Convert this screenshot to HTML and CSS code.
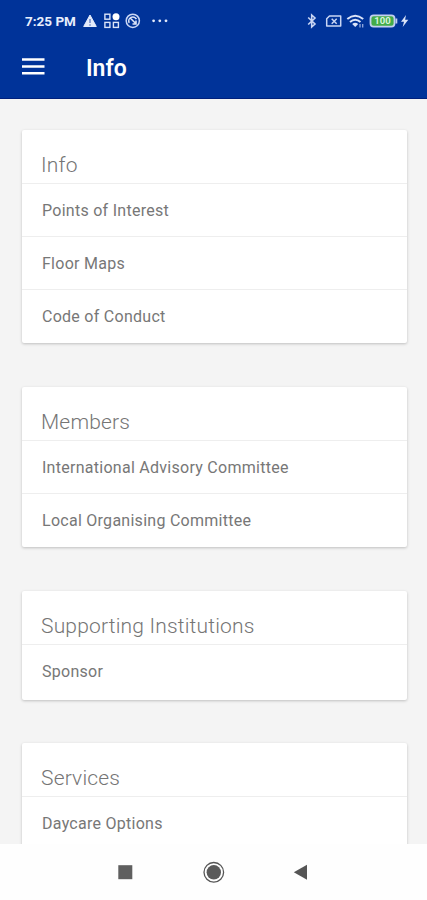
FILE: index.html
```html
<!DOCTYPE html>
<html lang="en">
<head>
    <meta charset="UTF-8">
    <meta name="viewport" content="width=device-width, initial-scale=1.0">
    <title>Info</title>
    <link rel="stylesheet" href="styles.css">
</head>
<body>
    <header class="header">
        <div class="status-bar">
            <span class="time">7:25 PM</span>
            <svg class="status-left" width="88" height="18" viewBox="0 0 88 18">
                <!-- warning -->
                <path d="M7 3 L13.3 14.5 H.7 Z" fill="#e4ebfb" stroke="#e4ebfb" stroke-linejoin="round"/>
                <path d="M7 7 V11 M7 12.3 V13.8" stroke="#5b78c0" stroke-width="1.3"/>
                <!-- apps -->
                <g fill="none" stroke="#dbe4f8" stroke-width="1.4">
                    <rect x="21.9" y="2.2" width="5" height="5"/>
                    <rect x="21.9" y="10.4" width="5" height="5"/>
                    <rect x="30.4" y="10.4" width="5" height="5"/>
                </g>
                <circle cx="33" cy="4.8" r="3.5" fill="#fff"/>
                <!-- sync -->
                <circle cx="49.8" cy="8.8" r="6.6" fill="none" stroke="#c9d6f4" stroke-width="1.5"/>
                <path d="M46.2 10.8 A4 4 0 0 1 53.4 7.2 M47.2 6 L53 11.8 M53 8.5 V12 H49.5" fill="none" stroke="#dbe4f8" stroke-width="1.6"/>
                <!-- more -->
                <g fill="#e4ebfb">
                    <circle cx="70.6" cy="8.8" r="1.4"/>
                    <circle cx="76.8" cy="8.8" r="1.4"/>
                    <circle cx="83" cy="8.8" r="1.4"/>
                </g>
            </svg>
            <svg class="status-right" width="106" height="18" viewBox="0 0 106 18">
                <!-- bluetooth -->
                <path d="M4.2 5.5 L11 12 L7.7 15 V3 L11 6 L4.2 12.5" fill="none" stroke="#c9d6f4" stroke-width="1.6"/>
                <!-- sim -->
                <path d="M25.5 4 H36.7 V14 H22.7 V6.8 Z" fill="none" stroke="#c9d6f4" stroke-width="1.5" stroke-linejoin="round"/>
                <path d="M27.7 6.7 L32.7 11.7 M32.7 6.7 L27.7 11.7" stroke="#c9d6f4" stroke-width="1.5"/>
                <!-- wifi -->
                <g fill="none" stroke="#dbe4f8" stroke-width="2">
                    <path d="M43.3 7 Q51.2 .5 59.2 7"/>
                    <path d="M46 10 Q51.2 5.5 56.5 10"/>
                </g>
                <path d="M48.2 12 Q51.2 9.6 54.2 12 L51.2 15 Z" fill="#dbe4f8"/>
                <path d="M56 12 V15.5 M58.7 12 V15.5" stroke="#93aade" stroke-width="1.3"/>
                <!-- battery -->
                <rect x="66.5" y="3.3" width="24" height="11.4" rx="3.2" fill="#43ab49" stroke="#c2cff0" stroke-width="1.8"/>
                <path d="M92.4 6.5 V11.5" stroke="#c2cff0" stroke-width="1.8"/>
                <text class="battery-text" x="78.5" y="12.3" text-anchor="middle">100</text>
                <!-- charging -->
                <path d="M102 3 L97 9.8 H100 L98.7 15 L104.3 7.8 H101.1 Z" fill="#dbe4f8"/>
            </svg>
        </div>
        <div class="toolbar">
            <svg class="menu-icon" width="23" height="18" viewBox="0 0 23 18">
                <path d="M0 1.5 H22.5 M0 8.5 H22.5 M0 15.3 H22.5" stroke="#fff" stroke-width="2.6"/>
            </svg>
            <h1>Info</h1>
        </div>
    </header>

    <main class="content">
        <section class="card">
            <h2>Info</h2>
            <ul>
                <li>Points of Interest</li>
                <li>Floor Maps</li>
                <li>Code of Conduct</li>
            </ul>
        </section>
        <section class="card">
            <h2>Members</h2>
            <ul>
                <li>International Advisory Committee</li>
                <li>Local Organising Committee</li>
            </ul>
        </section>
        <section class="card card-single">
            <h2>Supporting Institutions</h2>
            <ul>
                <li>Sponsor</li>
            </ul>
        </section>
        <section class="card">
            <h2>Services</h2>
            <ul>
                <li>Daycare Options</li>
            </ul>
        </section>
    </main>

    <nav class="nav-bar">
        <svg width="22" height="22" viewBox="0 0 22 22">
            <rect x="3.3" y="4.2" width="14" height="14" fill="#5f5f5f"/>
        </svg>
        <svg width="22" height="22" viewBox="0 0 22 22">
            <circle cx="10.8" cy="11.3" r="9.8" fill="none" stroke="#555" stroke-width="1.3"/>
            <circle cx="10.8" cy="11.3" r="7.2" fill="#5a5a5a"/>
        </svg>
        <svg width="22" height="22" viewBox="0 0 22 22">
            <path d="M16 3.8 V18.8 L2.8 11.3 Z" fill="#555"/>
        </svg>
    </nav>
</body>
</html>
```
FILE: styles.css
```css
* {
    box-sizing: border-box;
}
body {
    display: flex;
    flex-direction: column;
    height: 900px;
    margin: 0;
    overflow: hidden;
    background-color: #f4f4f4;
    font-family: Roboto, "Liberation Sans", sans-serif;
}
.header {
    flex: none;
    height: 99px;
    background-color: #003399;
    border-bottom: 1px solid #00207c;
    color: #fff;
}
.status-bar {
    display: flex;
    align-items: center;
    height: 42px;
    padding: 0 17px 0 25px;
}
.time {
    width: 58px;
    color: #e8eefc;
    font-size: 13.5px;
    font-weight: 700;
    white-space: nowrap;
}
.status-right {
    margin-left: auto;
}
.battery-text {
    fill: #d8f5dc;
    font-size: 9.5px;
    font-weight: bold;
}
.toolbar {
    display: flex;
    align-items: center;
    height: 50px;
    padding-left: 22px;
}
.toolbar h1 {
    margin: 2px 0 0 41px;
    font-size: 23px;
    font-weight: 600;
}
.content {
    flex: 1;
    min-height: 0;
    overflow: hidden;
    padding: 31px 20px 0 22px;
}
.card {
    margin-bottom: 44px;
    background-color: #fff;
    border-radius: 2px;
    box-shadow: 0 1px 3px rgba(0, 0, 0, 0.22);
}
.card h2 {
    height: 54px;
    margin: 0;
    padding: 21px 19px 0;
    border-bottom: 1px solid #eee;
    color: #757575;
    font-size: 21px;
    font-weight: 300;
    letter-spacing: 0.18px;
    line-height: 28px;
}
.card ul {
    margin: 0;
    padding: 0;
    list-style: none;
}
.card li {
    height: 53px;
    padding: 0 20px;
    border-bottom: 1px solid #eee;
    color: #777;
    font-size: 16px;
    letter-spacing: 0.27px;
    line-height: 54px;
}
.card li:last-child {
    border-bottom: none;
}
.card-single {
    margin-bottom: 43px;
    padding-bottom: 2px;
}
.nav-bar {
    display: flex;
    flex: none;
    justify-content: center;
    gap: 66px;
    height: 56px;
    padding-top: 17px;
    background-color: #fefefe;
}
```
